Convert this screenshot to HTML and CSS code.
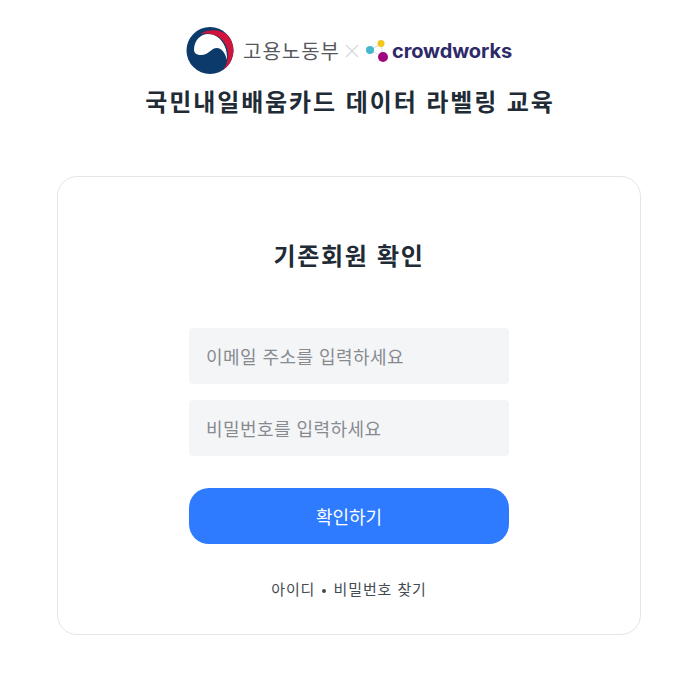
FILE: index.html
```html
<!DOCTYPE html>
<html lang="ko">
<head>
  <meta charset="UTF-8" />
  <meta name="viewport" content="width=device-width, initial-scale=1.0"/>
  <title>기존회원 확인</title>
  <link rel="stylesheet" href="styles.css">
</head>
<body>
  <header class="top">
    <div class="logos">
      <svg class="emblem" viewBox="0 0 48 47" width="48" height="47">
        <circle cx="24" cy="23.500" r="23.500" fill="#0b3a6b"/>
        <path d="M8 23C8 13 15 7 22 7C33 7 42 18 41 33C39 25 35 21 31 21C25 21 23 28 15 28C11 28 8 26 8 23Z" fill="#fff"/>
        <path d="M14 7C24 1 36 3 42 8.500A23.500 23.500 0 0 1 37 43C42 36 43 28 41 21C38 12 30 7 22 6.500C19 6.300 16 6.500 14 7Z" fill="#d0143c"/>
      </svg>
      <span class="moel">고용노동부</span>
      <svg class="cross" viewBox="0 0 14 14" width="14" height="14">
        <path d="M1 1L13 13M13 1L1 13" stroke="#d4d6d8" stroke-width="1.2" fill="none"/>
      </svg>
      <svg class="dots" viewBox="0 0 24 24" width="24" height="24">
        <path d="M5 11L16 5M5 11L18 18M16 5L18 18" stroke="#cfd2d6" stroke-width="0.8" fill="none"/>
        <circle cx="5" cy="11" r="4" fill="#45b8d0"/>
        <circle cx="16" cy="4.500" r="3.500" fill="#f6c51b"/>
        <circle cx="18" cy="18" r="5" fill="#a0077f"/>
      </svg>
      <span class="crowd">crowdworks</span>
    </div>
    <h1 class="course">국민내일배움카드 데이터 라벨링 교육</h1>
  </header>

  <main class="card">
    <h2 class="card-title">기존회원 확인</h2>
    <form class="login">
      <input class="field" type="text" placeholder="이메일 주소를 입력하세요" />
      <input class="field" type="password" placeholder="비밀번호를 입력하세요" />
      <button class="submit" type="button">확인하기</button>
    </form>
    <a class="find" href="#">아이디 <span class="dot"></span> 비밀번호 찾기</a>
  </main>
</body>
</html>
```

FILE: styles.css
```css
* {
  box-sizing: border-box;
  font-family: "Noto Sans CJK KR", "Noto Sans", sans-serif;
}
body {
  margin: 0;
  padding: 27px 53px 0 57px;
  background: #fff;
  color: #212b36;
}
.top {
  display: flex;
  flex-direction: column;
  align-items: center;
}
.logos {
  display: flex;
  align-items: center;
  height: 47px;
}
.emblem {
  margin-right: 9px;
}
.moel {
  font-size: 20px;
  color: #55585c;
  letter-spacing: 1px;
}
.cross {
  margin: 0 6px 0 5px;
}
.dots {
  margin: 0 3px 0 0;
}
.crowd {
  font-family: "Inter", sans-serif;
  font-size: 20px;
  font-weight: 700;
  color: #2e2a6a;
  letter-spacing: -0.1px;
}
.course {
  margin: 10px 0 0;
  padding-left: 2px;
  font-size: 24px;
  font-weight: 700;
  line-height: 34px;
  letter-spacing: 1.9px;
}
.card {
  margin-top: 58px;
  height: 459px;
  padding-top: 62px;
  border: 1px solid #e3e5e8;
  border-radius: 20px;
  display: flex;
  flex-direction: column;
  align-items: center;
}
.card-title {
  margin: 0;
  font-size: 24px;
  font-weight: 700;
  line-height: 32px;
  letter-spacing: 1.7px;
}
.login {
  width: 320px;
  margin-top: 57px;
  display: flex;
  flex-direction: column;
  gap: 16px;
}
.field {
  height: 56px;
  padding: 0 17px;
  border: none;
  border-radius: 4px;
  background: #f4f5f7;
  font-size: 18px;
  letter-spacing: 0.45px;
}
.field::placeholder {
  color: #878b90;
  opacity: 1;
}
.submit {
  height: 56px;
  margin-top: 16px;
  border: none;
  border-radius: 20px;
  background: #2f7bff;
  color: #fff;
  font-size: 18px;
}
.find {
  margin-top: 33px;
  color: #454b52;
  font-size: 15px;
  line-height: 24px;
  letter-spacing: 0.9px;
  text-decoration: none;
}
.dot {
  display: inline-block;
  width: 4px;
  height: 4px;
  margin: 0 2px;
  border-radius: 50%;
  background: #454b52;
  vertical-align: middle;
}
```
